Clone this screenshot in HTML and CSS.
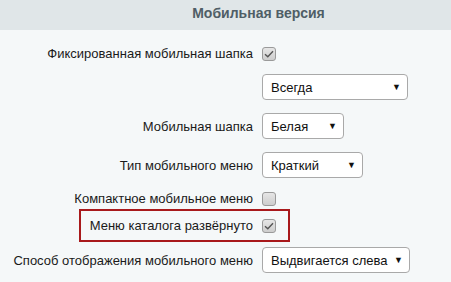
FILE: index.html
```html
<!DOCTYPE html>
<html lang="ru">
<head>
    <meta charset="UTF-8">
    <meta name="viewport" content="width=device-width, initial-scale=1.0">
    <title>Мобильная версия</title>
    <link rel="stylesheet" href="styles.css">
</head>
<body>

<div class="panel">
    <div class="panel-title">Мобильная версия</div>

    <div class="options">
        <div class="row row-first">
            <div class="label">Фиксированная мобильная шапка</div>
            <div class="control">
                <span class="checkbox checked">
                    <svg width="10" height="8" viewBox="0 0 10 8"><path d="M1 4.2 L3.8 6.8 L9 1.2" fill="none" stroke="#555" stroke-width="1.4"/></svg>
                </span>
            </div>
        </div>

        <div class="row">
            <div class="label"></div>
            <div class="control">
                <div class="select select-always"><span>Всегда</span><span class="arrow">▼</span></div>
            </div>
        </div>

        <div class="row">
            <div class="label">Мобильная шапка</div>
            <div class="control">
                <div class="select select-color"><span>Белая</span><span class="arrow">▼</span></div>
            </div>
        </div>

        <div class="row">
            <div class="label">Тип мобильного меню</div>
            <div class="control">
                <div class="select select-type"><span>Краткий</span><span class="arrow">▼</span></div>
            </div>
        </div>

        <div class="row">
            <div class="label">Компактное мобильное меню</div>
            <div class="control">
                <span class="checkbox"></span>
            </div>
        </div>

        <!-- выделенная опция -->
        <div class="row row-marked">
            <div class="marked">
                <div class="label">Меню каталога развёрнуто</div>
                <div class="control">
                    <span class="checkbox checked">
                        <svg width="10" height="8" viewBox="0 0 10 8"><path d="M1 4.2 L3.8 6.8 L9 1.2" fill="none" stroke="#555" stroke-width="1.4"/></svg>
                    </span>
                </div>
            </div>
        </div>

        <div class="row row-last">
            <div class="label">Способ отображения мобильного меню</div>
            <div class="control">
                <div class="select select-way"><span>Выдвигается слева</span><span class="arrow">▼</span></div>
            </div>
        </div>
    </div>
</div>

</body>
</html>
```

FILE: styles.css
```css
body {
    margin: 0;
    font-family: Arial, "Liberation Sans", sans-serif;
    background-color: #f5f8f9;
    color: #1a1a1a;
}
.panel {
    width: 451px;
    height: 282px;
    background-color: #f5f8f9;
}
.panel-title {
    height: 30px;
    line-height: 26px;
    padding-left: 66px;
    text-align: center;
    font-size: 14px;
    font-weight: bold;
    color: #4f5e66;
    background-color: #e0e6e8;
}
.options {
    padding-top: 16px;
}
.row {
    display: flex;
    align-items: center;
    margin-top: 13px;
    font-size: 13px;
}
.row-first {
    margin-top: 0;
}
.row-marked {
    margin-top: 3px;
}
.row-last {
    margin-top: 5px;
}
.label {
    width: 253px;
    text-align: right;
    white-space: nowrap;
}
.control {
    display: flex;
    align-items: center;
    padding-left: 9px;
}
.marked {
    display: flex;
    align-items: center;
    margin-left: 79px;
    width: 207px;
    height: 29px;
    border: 2px solid #a8191c;
}
.marked .label {
    width: 172px;
}
.checkbox {
    display: flex;
    align-items: center;
    justify-content: center;
    box-sizing: border-box;
    width: 14px;
    height: 14px;
    border: 1px solid #9a9a9a;
    border-radius: 3px;
    background: linear-gradient(#e6e6e6, #cdcdcd);
}
.select {
    display: flex;
    align-items: center;
    justify-content: space-between;
    box-sizing: border-box;
    height: 26px;
    padding: 0 6px 0 8px;
    border: 1px solid #a9a9a9;
    border-radius: 4px;
    background-color: #ffffff;
    font-size: 13px;
    color: #111;
}
.arrow {
    font-size: 9px;
    color: #111;
}
.select-always {
    width: 146px;
}
.select-color {
    width: 82px;
}
.select-type {
    width: 101px;
}
.select-way {
    width: 148px;
}
```
